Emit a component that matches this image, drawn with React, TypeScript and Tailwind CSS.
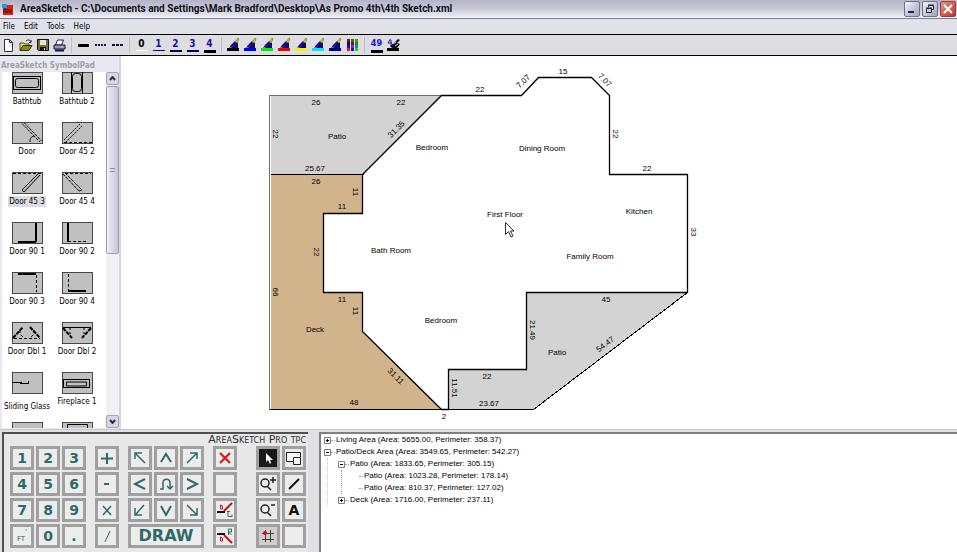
import type { ReactNode } from 'react';

const uiFont = "font-['DejaVu_Sans_Condensed','DejaVu_Sans',sans-serif]";

/* ---------- Title bar ---------- */

function TitleBar() {
  return (
    <header className="flex h-[19px] shrink-0 items-center border-b border-[#7c7c9c] bg-linear-to-b from-[#b4b4c8] via-[#c9c9d8] to-[#f2f2f8] pl-[2px] pr-px">
      <svg width="11" height="11" viewBox="0 0 11 11" className="shrink-0" aria-hidden="true">
        <rect x="1" y="1" width="10" height="10" fill="#d8200c" />
        <rect x="0" y="0" width="5" height="4" fill="#1c9cf0" />
        <path d="M2 9V5h2v4M6 9V5l3 4V5" stroke="#5a0a04" fill="none" />
      </svg>
      <h1 className="ml-[7px] min-w-0 flex-1 truncate font-['Roboto',sans-serif] text-[10px] leading-[18px] font-bold text-[#101018]">
        AreaSketch - C:\Documents and Settings\Mark Bradford\Desktop\As Promo 4th\4th Sketch.xml
      </h1>
      <div className="flex gap-[2px]">
        <button aria-label="Minimize" className="h-[16px] w-[16px] rounded-xs border border-[#70708c] bg-linear-to-br from-[#f4f4fa] to-[#a0a0bc]">
          <svg width="14" height="14" viewBox="0 0 14 14" aria-hidden="true">
            <path d="M3 10h6" stroke="#26263c" strokeWidth="2" />
          </svg>
        </button>
        <button aria-label="Restore" className="h-[16px] w-[16px] rounded-xs border border-[#70708c] bg-linear-to-br from-[#f4f4fa] to-[#a0a0bc]">
          <svg width="14" height="14" viewBox="0 0 14 14" fill="none" stroke="#26263c" aria-hidden="true">
            <path d="M5.500 5V3.500h5v4H9M5 3h6M3.500 6.500h5v4h-5zM3 6h6" />
          </svg>
        </button>
        <button aria-label="Close" className="h-[16px] w-[16px] rounded-xs border border-[#8c4048] bg-linear-to-br from-[#ee9088] to-[#c02c28]">
          <svg width="14" height="14" viewBox="0 0 14 14" aria-hidden="true">
            <path d="M3 3l8 8M11 3l-8 8" stroke="#fff" strokeWidth="2" />
          </svg>
        </button>
      </div>
    </header>
  );
}

/* ---------- Menu and toolbar ---------- */

function MenuBar() {
  return (
    <nav className={`flex h-[15px] shrink-0 items-center gap-[9px] bg-[#e1e1ea] pl-[3px] text-[8px] text-black ${uiFont}`}>
      {['File', 'Edit', 'Tools', 'Help'].map((m) => (
        <button key={m}>{m}</button>
      ))}
    </nav>
  );
}

function Tool({ label, children }: { label: string; children: ReactNode }) {
  return (
    <button aria-label={label} className="flex h-[17px] w-[17px] shrink-0 items-center justify-center">
      {children}
    </button>
  );
}

function Divider() {
  return <span className="mx-[3px] h-[16px] w-px shrink-0 bg-[#c0c0c4]" />;
}

function Pen({ color }: { color: string }) {
  return (
    <svg width="13" height="14" viewBox="0 0 13 14" aria-hidden="true">
      <rect x="0" y="10" width="12" height="3" fill={color} />
      <path d="M2 10l3-1 5-5-2-1-4 4z" fill="#10108c" />
      <path d="M4 10l5-6 2 1v5z" fill="#0a0a70" />
      <path d="M8 4l3-4 1 1-2 4z" fill="#d8d020" stroke="#4c4c10" strokeWidth=".5" />
    </svg>
  );
}

const penColors: [string, string][] = [
  ['Black', '#000000'],
  ['Blue', '#0000ff'],
  ['Green', '#00f000'],
  ['Red', '#f00000'],
  ['Yellow', '#f4f400'],
  ['Cyan', '#00e8f0'],
  ['Navy', '#000088'],
];

const paletteCells = ['#801010', '#108010', '#808010', '#200060', '#303030', '#109010', '#1010b0', '#b010b0', '#109090', '#f01010', '#1010f0', '#10e010'];

const weightBars = ['h-px bg-[#f8f8ff]', 'h-px bg-[#000070]', 'h-[2px] bg-[#000050]', 'h-[2px] bg-[#000050]', 'h-[3px] bg-black'];

function Toolbar() {
  return (
    <div className="flex h-[22px] shrink-0 items-center overflow-hidden border-y border-black bg-[#dedee2]" role="toolbar">
      <Tool label="New">
        <svg width="12" height="13" viewBox="0 0 12 13" aria-hidden="true">
          <path d="M1.500 .5h5l3 3v9h-8z" fill="#fff" stroke="#30303c" />
          <path d="M6.500 .5v3h3" fill="none" stroke="#30303c" />
        </svg>
      </Tool>
      <Tool label="Open">
        <svg width="14" height="13" viewBox="0 0 14 13" aria-hidden="true">
          <path d="M1 11V4h4l1 1h4v2" fill="#f0e860" stroke="#48480c" />
          <path d="M1 11.500l3-5h9l-3 5z" fill="#88881c" stroke="#30300c" />
          <path d="M7 2c2-2 4-1 5 1m0-2v2.500h-2" fill="none" stroke="#202020" />
        </svg>
      </Tool>
      <Tool label="Save">
        <svg width="12" height="12" viewBox="0 0 12 12" aria-hidden="true">
          <path d="M.5 .5h11v11H1.500l-1-1z" fill="#70702c" stroke="#101010" />
          <path d="M3 1h6v5H3z" fill="#e4e4e8" />
          <path d="M3 8h6v3H3z" fill="#101010" />
          <path d="M7 9h1v2H7z" fill="#fff" />
        </svg>
      </Tool>
      <Tool label="Print">
        <svg width="13" height="13" viewBox="0 0 13 13" aria-hidden="true">
          <path d="M4.500 1h6l-2 5H2.500z" fill="#fff" stroke="#202058" />
          <path d="M1 6h11v4H1z" fill="#9898b4" stroke="#101050" />
          <path d="M2 11.500h9" stroke="#101050" strokeWidth="2" />
          <path d="M8 8h2" stroke="#e8e040" />
        </svg>
      </Tool>
      <Divider />
      <Tool label="Solid line">
        <span className="h-[3px] w-[11px] bg-black" />
      </Tool>
      <Tool label="Dotted line">
        <svg width="11" height="3" viewBox="0 0 11 3" aria-hidden="true">
          <path d="M0 1h11" stroke="#101050" strokeWidth="2" strokeDasharray="2 1" />
        </svg>
      </Tool>
      <Tool label="Dashed line">
        <svg width="12" height="3" viewBox="0 0 12 3" aria-hidden="true">
          <path d="M0 1h12" stroke="#101030" strokeWidth="2" strokeDasharray="3 1" />
        </svg>
      </Tool>
      <Divider />
      {weightBars.map((bar, i) => (
        <button
          key={i}
          className={`flex h-[17px] w-[17px] shrink-0 flex-col items-center gap-px pt-px font-['DejaVu_Sans_Condensed',sans-serif] text-[10px] leading-[11px] font-bold ${i === 0 ? 'text-black' : 'text-[#1414a0]'}`}
        >
          {i}
          <span className={`w-[12px] ${bar}`} />
        </button>
      ))}
      <Divider />
      {penColors.map(([name, color]) => (
        <Tool key={name} label={`${name} pen`}>
          <Pen color={color} />
        </Tool>
      ))}
      <Tool label="More colors">
        <svg width="13" height="13" viewBox="0 0 13 13" aria-hidden="true">
          {paletteCells.map((c, i) => (
            <rect key={i} x={1 + (i % 3) * 4} y={Math.floor(i / 3) * 3} width="3" height="3" fill={c} />
          ))}
        </svg>
      </Tool>
      <Divider />
      <button className="flex h-[17px] w-[17px] shrink-0 flex-col items-center gap-px pt-px font-['DejaVu_Sans_Condensed',sans-serif] text-[9px] leading-[11px] font-bold text-[#1010e0]">
        49
        <span className="h-[3px] w-[12px] bg-black" />
      </button>
      <Tool label="Edit dimension">
        <svg width="13" height="14" viewBox="0 0 13 14" aria-hidden="true">
          <rect x="0" y="10" width="12" height="3" fill="#000" />
          <path d="M3.500 1L1 5h4M4 2v6" stroke="#1010d0" fill="none" />
          <path d="M3 8l5-4 3-3 2 1-3 3 3 1-3 4H5z" fill="#10101c" />
          <path d="M6 6l3-2M8 8l3-2" stroke="#c8c8d8" />
        </svg>
      </Tool>
    </div>
  );
}

/* ---------- Symbol pad ---------- */

const symbols: { name: string; art: ReactNode; low?: boolean; selected?: boolean; clipped?: boolean }[] = [
  {
    name: 'Bathtub',
    art: (
      <>
        <rect x="1.500" y="4.500" width="27" height="13" />
        <rect x="3.500" y="6.500" width="23" height="9" rx="2" />
      </>
    ),
  },
  {
    name: 'Bathtub 2',
    art: (
      <>
        <path d="M9.500 0v21M20.500 0v21" />
        <rect x="10.500" y="1.500" width="9" height="18" rx="3" />
      </>
    ),
  },
  {
    name: 'Door',
    art: (
      <>
        <path d="M10 1.500L28 20M12 .5L29.500 19" strokeDasharray="3 1" />
        <path d="M18 20c0-4 1-5 4-6" />
      </>
    ),
  },
  {
    name: 'Door 45 2',
    art: (
      <>
        <path d="M2 18L18 2M4 20L20 4" strokeDasharray="2 1" />
        <path d="M2 20.500h28" strokeDasharray="3 2" />
      </>
    ),
  },
  {
    name: 'Door 45 3',
    selected: true,
    art: (
      <>
        <path d="M10 18L26 2M12 20L28 3M10 18l2 2" />
        <path d="M1 1.500h28" strokeDasharray="3 2" />
      </>
    ),
  },
  {
    name: 'Door 45 4',
    art: (
      <>
        <path d="M1 2l16 17M3 1l17 17M17 19l3-1" strokeDasharray="3 1" />
        <path d="M3 1.500h26" strokeDasharray="3 2" />
      </>
    ),
  },
  { name: 'Door 90 1', art: <path d="M24 1v19M6 20h18" strokeWidth="2" /> },
  {
    name: 'Door 90 2',
    art: (
      <>
        <path d="M6 1v19" strokeWidth="2" />
        <path d="M6 19.500h18" strokeDasharray="3 2" />
      </>
    ),
  },
  {
    name: 'Door 90 3',
    art: (
      <>
        <path d="M6 2h18" strokeWidth="2" />
        <path d="M24.500 3v17" strokeDasharray="3 2" />
      </>
    ),
  },
  {
    name: 'Door 90 4',
    art: (
      <>
        <path d="M6 19h18" strokeWidth="2" />
        <path d="M6.500 2v17" strokeDasharray="3 2" />
      </>
    ),
  },
  {
    name: 'Door Dbl 1',
    art: (
      <>
        <path d="M1 16L11 5M18 5l10 11" strokeWidth="2" strokeDasharray="4 1" />
        <path d="M2 16.500h26M8 8v4l4 4M22 8v4l-4 4" strokeDasharray="3 2" />
      </>
    ),
  },
  {
    name: 'Door Dbl 2',
    art: (
      <>
        <path d="M1 6l9 10M29 6l-9 10" strokeWidth="2" strokeDasharray="4 1" />
        <path d="M1 5.500h28" />
        <path d="M8 6v6M22 6v6" strokeDasharray="2 2" />
      </>
    ),
  },
  { name: 'Sliding Glass', low: true, art: <path d="M0 10.500h10M8 11.500h8M16.500 9v3" /> },
  {
    name: 'Fireplace 1',
    art: (
      <>
        <rect x="1.500" y="7.500" width="26" height="8" />
        <path d="M4.500 14v-4h20v4z" />
      </>
    ),
  },
  { name: 'Fireplace 2', clipped: true, art: null },
  { name: 'Fireplace 3', clipped: true, art: <path d="M5.500 21V2.500h20V21" /> },
];

function SymbolPad() {
  return (
    <aside className="flex w-[121px] shrink-0 flex-col border-r-2 border-[#d4d4e4] bg-[#e8e8f0]">
      <h2 className="h-[16px] shrink-0 overflow-hidden pl-px font-['DejaVu_Sans_Condensed',sans-serif] text-[8px] leading-[20px] font-bold whitespace-nowrap text-[#a0a0a6]">
        AreaSketch SymbolPad
      </h2>
      <div className="mb-px ml-[2px] flex min-h-0 flex-1 bg-white">
        <div className="grid min-w-0 flex-1 auto-rows-[50px] grid-cols-2 content-start overflow-hidden pr-[4px]">
          {symbols.map((s) => (
            <button key={s.name} aria-label={s.name} className={`flex flex-col items-center ${s.low ? 'gap-[7px]' : 'gap-[2px]'}`}>
              <svg width="31" height="22" viewBox="0 0 31 22" className="shrink-0" fill="none" stroke="#000" aria-hidden="true">
                <rect x=".5" y=".5" width="30" height="21" fill="#c0c0c0" stroke="#484848" />
                {s.art}
              </svg>
              {!s.clipped && (
                <span className={`px-px text-[8px] leading-[11px] whitespace-nowrap text-black ${uiFont} ${s.selected ? 'bg-[#dcdce4]' : ''}`}>
                  {s.name}
                </span>
              )}
            </button>
          ))}
        </div>
        <div className="flex w-[13px] shrink-0 flex-col bg-[#f2f2f6]">
          <button aria-label="Scroll up" className="flex h-[13px] shrink-0 items-center justify-center rounded-xs border border-[#a4a4b8] bg-[#d8d8e4]">
            <svg width="7" height="5" viewBox="0 0 7 5" fill="none" stroke="#303040" strokeWidth="2" aria-hidden="true">
              <path d="M1 4l2.500-3L6 4" />
            </svg>
          </button>
          <div className="mt-px flex h-[168px] flex-col items-center justify-center gap-[2px] rounded-xs border border-[#9c9cb4] bg-linear-to-r from-[#f0f0f6] to-[#c4c4d4]">
            <span className="h-px w-[5px] bg-[#8c8ca4]" />
            <span className="h-px w-[5px] bg-[#8c8ca4]" />
          </div>
          <button aria-label="Scroll down" className="mt-auto flex h-[13px] shrink-0 items-center justify-center rounded-xs border border-[#a4a4b8] bg-[#d8d8e4]">
            <svg width="7" height="5" viewBox="0 0 7 5" fill="none" stroke="#303040" strokeWidth="2" aria-hidden="true">
              <path d="M1 1l2.500 3L6 1" />
            </svg>
          </button>
        </div>
      </div>
    </aside>
  );
}

/* ---------- Floor plan ---------- */

const planLabels: [string, number, number, number?][] = [
  ['26', 316, 102],
  ['22', 401, 102],
  ['22', 276, 134, 90],
  ['Patio', 337, 136],
  ['31.35', 396, 129, -45],
  ['25.67', 315, 168],
  ['26', 316, 181],
  ['11', 356, 192, 90],
  ['11', 342, 206],
  ['22', 317, 252, 90],
  ['66', 276, 292, 90],
  ['11', 342, 299],
  ['11', 356, 311, 90],
  ['Deck', 315, 329],
  ['31.11', 396, 376, 45],
  ['48', 354, 402],
  ['2', 444, 416],
  ['22', 480, 89],
  ['7.07', 523, 81, -45],
  ['15', 563, 71],
  ['7.07', 605, 80, 45],
  ['22', 616, 134, 90],
  ['22', 647, 168],
  ['33', 694, 232, 90],
  ['Bedroom', 432, 147],
  ['Dining Room', 542, 148],
  ['First Floor', 505, 214],
  ['Kitchen', 639, 211],
  ['Bath Room', 391, 250],
  ['Family Room', 590, 256],
  ['Bedroom', 441, 320],
  ['45', 606, 299],
  ['21.49', 533, 330, 90],
  ['54.47', 605, 344, -37],
  ['Patio', 557, 352],
  ['22', 487, 376],
  ['11.51', 455, 388, 90],
  ['23.67', 489, 403],
];

function FloorPlan() {
  return (
    <main className="min-w-0 flex-1 overflow-hidden bg-white">
      <svg width="836" height="373" viewBox="121 56 836 373" role="img" aria-label="Floor plan sketch">
        <g transform="translate(.5 .5)" shapeRendering="crispEdges">
          <path d="M270 95H441L363 174H270z" fill="#d3d3d3" />
          <path d="M270 174H362V213H323V292H362V331L441 409H270z" fill="#d2b48c" />
          <path d="M526 292H687L533 409H448V369H526z" fill="#d3d3d3" />
          <path d="M441 95H269V409" fill="none" stroke="#707070" />
          <path d="M270 174H363M269 409H441M448 409H533L687 292" fill="none" stroke="#000" />
        </g>
        <path
          transform="translate(.5 .5)"
          d="M441 95H521L538 77H591L609 95V174H687V292H526V369H448V409H441L362 331V292H323V213H362V174z"
          fill="none"
          stroke="#000"
          strokeWidth="1.3"
        />
        <g fill="#000" className="font-['Liberation_Sans',Arial,sans-serif] text-[8px]" textAnchor="middle">
          {planLabels.map(([text, x, y, angle], i) => (
            <text key={i} x="0" y="3" transform={`translate(${x} ${y}) rotate(${angle ?? 0})`}>
              {text}
            </text>
          ))}
        </g>
        <path d="M505.500 222.500v12l3-3 2.500 5.500 2-1-2.500-5h3.500z" fill="#fff" stroke="#303030" />
      </svg>
    </main>
  );
}

/* ---------- Keypad ---------- */

function Key({ label, wide, dark, children }: { label: string; wide?: boolean; dark?: boolean; children?: ReactNode }) {
  return (
    <button
      aria-label={label}
      className={`flex h-[24px] items-center justify-center border-3 border-[#a0a0a0] font-['DejaVu_Sans',sans-serif] text-[14px] leading-none font-bold text-[#2f6a6a] ${wide ? 'col-span-3' : 'w-[24px]'} ${dark ? 'bg-[#181818]' : 'bg-[#ececec]'}`}
    >
      {children}
    </button>
  );
}

function Glyph({ d, color = '#2f6a6a', weight = 2 }: { d: string; color?: string; weight?: number }) {
  return (
    <svg width="18" height="18" viewBox="0 0 18 18" className="shrink-0" fill="none" stroke={color} strokeWidth={weight} aria-hidden="true">
      <path d={d} />
    </svg>
  );
}

function Keypad() {
  return (
    <section className="ml-[2px] flex w-[306px] shrink-0 flex-col border-t-2 border-l-2 border-[#505050] bg-[#e8e8e8] pr-px">
      <h2 className="h-[12px] shrink-0 pr-px text-right font-['DejaVu_Sans',sans-serif] text-[11px] leading-[12px] text-[#303030] [font-variant:small-caps]">
        AreaSketch Pro tpc
      </h2>
      <div className="flex justify-between pr-px pl-[6px]">
        <div className="grid grid-cols-3 gap-[2px]">
          {['1', '2', '3', '4', '5', '6', '7', '8', '9'].map((n) => (
            <Key key={n} label={n}>{n}</Key>
          ))}
          <Key label="Feet">
            <span className="pt-[7px] text-[7px] font-normal">FT</span>
            <span className="pb-[7px] text-[7px] font-normal">'</span>
          </Key>
          <Key label="0">0</Key>
          <Key label=".">.</Key>
        </div>
        <div className="grid gap-[2px]">
          <Key label="Plus"><Glyph d="M9 4v11M3 9.500h12" /></Key>
          <Key label="Minus"><Glyph d="M6 9h5" /></Key>
          <Key label="Multiply"><Glyph d="M5 5l8 9M13 5l-8 9" weight={1.5} /></Key>
          <Key label="Divide"><Glyph d="M12 4L7 15" weight={1} /></Key>
        </div>
        <div className="grid grid-cols-3 gap-[2px]">
          <Key label="Up left"><Glyph d="M14 14L5 5M4 10V4h7" weight={1.5} /></Key>
          <Key label="Up"><Glyph d="M4 13l5-8 5 8" /></Key>
          <Key label="Up right"><Glyph d="M4 14l9-9M7 4h7v6" weight={1.5} /></Key>
          <Key label="Left"><Glyph d="M14 4L4 9l10 5" /></Key>
          <Key label="Arc"><Glyph d="M3 14h3V8c0-5 7-5 7 0v6M10 11l3 3 3-3" weight={1.5} /></Key>
          <Key label="Right"><Glyph d="M4 4l10 5-10 5" /></Key>
          <Key label="Down left"><Glyph d="M13 4l-8 9M4 7v7h7" weight={1.5} /></Key>
          <Key label="Down"><Glyph d="M4 5l5 9 5-9" /></Key>
          <Key label="Down right"><Glyph d="M4 4l9 9M14 7v7H7" weight={1.5} /></Key>
          <Key label="Draw" wide><span className="text-[16px]">DRAW</span></Key>
        </div>
        <div className="grid gap-[2px]">
          <Key label="Delete"><Glyph d="M4 4l10 10M14 4L4 14" color="#e01010" /></Key>
          <Key label="Blank" />
          <Key label="Door left">
            <svg width="18" height="18" viewBox="0 0 18 18" className="shrink-0" fill="none" aria-hidden="true">
              <path d="M8 10l8-8" stroke="#d01010" strokeWidth="2" />
              <path d="M1 11h8" stroke="#101010" strokeWidth="2" />
              <path d="M4.500 4v4h2V5z" stroke="#d01010" />
              <path d="M11 10.500h3m-2 0v5h4v-2" stroke="#2f6a6a" />
            </svg>
          </Key>
          <Key label="Door right">
            <svg width="18" height="18" viewBox="0 0 18 18" className="shrink-0" fill="none" aria-hidden="true">
              <path d="M8 8l8 8" stroke="#d01010" strokeWidth="2" />
              <path d="M1 7h8" stroke="#101010" strokeWidth="2" />
              <path d="M4.500 10v4h2v-3z" stroke="#d01010" />
              <path d="M12.500 8V2h3v3h-3l3 3" stroke="#2f6a6a" />
            </svg>
          </Key>
        </div>
        <div className="ml-[10px] grid grid-cols-2 gap-[2px]">
          <Key label="Select" dark>
            <svg width="18" height="18" viewBox="0 0 18 18" className="shrink-0" aria-hidden="true">
              <path d="M7 4v9l2-2 2 4 1-1-1-3h3z" fill="#fff" />
            </svg>
          </Key>
          <Key label="Zoom window">
            <svg width="18" height="18" viewBox="0 0 18 18" fill="#f4f4f4" stroke="#202020" className="shrink-0" aria-hidden="true">
              <path d="M1.500 3.500h14v9h-14z" />
              <path d="M8.500 8.500h7v7h-7z" />
            </svg>
          </Key>
          <Key label="Zoom in"><Glyph d="M10 8a4 4 0 1 1-8 0 4 4 0 0 1 8 0M8 11l4 4M11 5h6M14 2v6" color="#202020" weight={1.5} /></Key>
          <Key label="Line"><Glyph d="M4 14L14 4" color="#101010" /></Key>
          <Key label="Zoom out"><Glyph d="M10 8a4 4 0 1 1-8 0 4 4 0 0 1 8 0M8 11l4 4M12 4h4" color="#202020" weight={1.5} /></Key>
          <Key label="Text"><span className="text-[14px] text-[#101010]">A</span></Key>
          <Key label="Snap to grid">
            <svg width="18" height="18" viewBox="0 0 18 18" className="shrink-0" aria-hidden="true">
              <rect width="18" height="18" fill="#d4cccc" />
              <path d="M3 6.500h12M3 12.500h12M6.500 3v12M11.500 3v12" stroke="#404040" />
              <circle cx="6" cy="6" r="2" fill="#d01010" />
            </svg>
          </Key>
          <Key label="Unused" />
        </div>
      </div>
    </section>
  );
}

/* ---------- Area tree ---------- */

function Toggle({ open }: { open: boolean }) {
  return (
    <button aria-label={open ? 'Collapse' : 'Expand'} className="shrink-0">
      <svg width="7" height="7" viewBox="0 0 7 7" fill="#fff" aria-hidden="true">
        <path d="M.5 .5h6v6h-6z" stroke="#808080" />
        <path d={open ? 'M2 3.500h3' : 'M2 3.500h3M3.500 2v3'} stroke="#000" />
      </svg>
    </button>
  );
}

function Row({ open, children }: { open?: boolean; children: ReactNode }) {
  return (
    <div className="flex h-[12px] items-center">
      {open === undefined ? <span className="ml-[3px] w-[4px]" /> : <Toggle open={open} />}
      <span className="mr-px w-[4px] border-t border-dotted border-[#a0a0a0]" />
      <span className="whitespace-nowrap">{children}</span>
    </div>
  );
}

function AreaTree() {
  return (
    <section className="ml-[11px] min-w-0 flex-1 overflow-hidden border-t-2 border-l-2 border-[#808080] bg-white pl-[3px] font-['Liberation_Sans',Arial,sans-serif] text-[8px] leading-[12px] text-black">
      <Row open={false}>Living Area (Area: 5655.00, Perimeter: 358.37)</Row>
      <Row open>Patio/Deck Area (Area: 3549.65, Perimeter: 542.27)</Row>
      <div className="ml-[3px] border-l border-dotted border-[#c8c8c8] pl-[10px]">
        <Row open>Patio (Area: 1833.65, Perimeter: 305.15)</Row>
        <div className="ml-[3px] border-l border-dotted border-[#a0a0a0] pl-[10px]">
          <Row>Patio (Area: 1023.28, Perimeter: 178.14)</Row>
          <Row>Patio (Area: 810.37, Perimeter: 127.02)</Row>
        </div>
        <Row open={false}>Deck (Area: 1716.00, Perimeter: 237.11)</Row>
      </div>
    </section>
  );
}

export default function App() {
  return (
    <div className="flex h-screen flex-col overflow-hidden bg-[#e0dfe3]">
      <TitleBar />
      <MenuBar />
      <Toolbar />
      <div className="flex min-h-0 flex-1">
        <SymbolPad />
        <FloorPlan />
      </div>
      <div className="flex h-[123px] shrink-0 border-t border-[#c8c8c8] pt-[2px]">
        <Keypad />
        <AreaTree />
      </div>
    </div>
  );
}
